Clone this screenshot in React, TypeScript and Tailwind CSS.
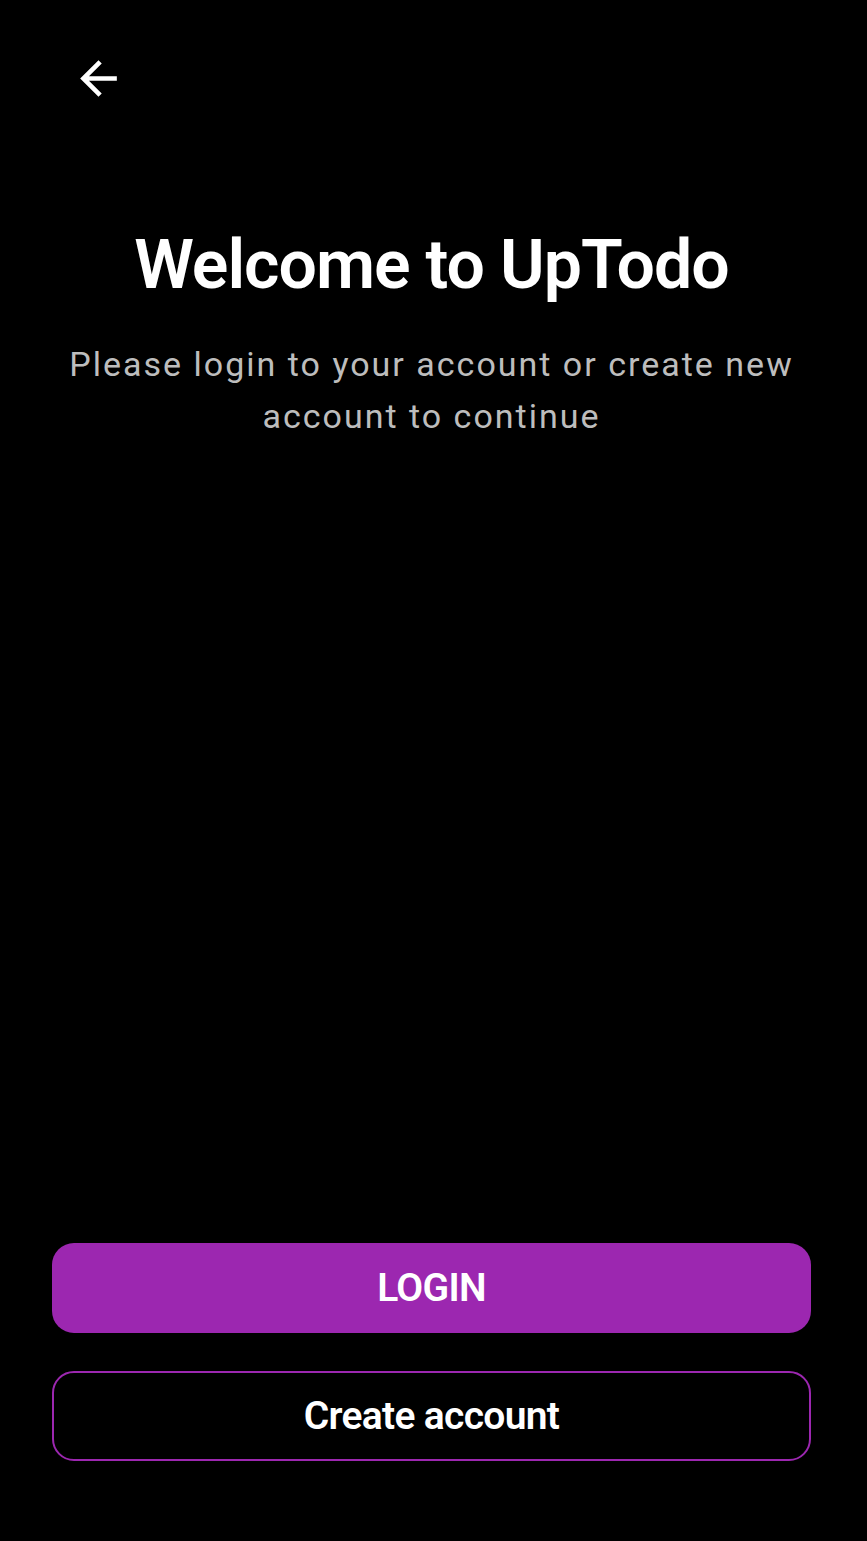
import React from "react";

export default function App() {
  return (
    <div className="flex h-[1541px] w-[867px] flex-col bg-black pl-[52px] pr-[56px] font-['Roboto',sans-serif]">
      <div className="pt-[51px]">
        <button className="ml-[19px] flex h-[55px] w-[55px] items-center justify-center text-white">
          <svg viewBox="0 0 24 24" className="h-[55px] w-[55px]" fill="currentColor">
            <path d="M20 11H7.83l5.59-5.59L12 4l-8 8 8 8 1.41-1.41L7.83 13H20v-2z" />
          </svg>
        </button>
      </div>
      <h1 className="mt-[121px] whitespace-nowrap text-center text-[68px] font-semibold leading-[76px] tracking-[-1px] text-white">
        Welcome to UpTodo
      </h1>
      <p className="mt-[35px] text-center text-[34px] leading-[52px] tracking-[2px] text-[#bdbdbd]">
        Please login to your account or create new account to continue
      </p>
      <div className="flex-1" />
      <div className="flex flex-col gap-[38px] pb-[80px]">
        <button className="h-[90px] w-full rounded-[22px] bg-[#9c27b0] text-[39px] font-semibold tracking-[-0.7px] text-white">
          LOGIN
        </button>
        <button className="h-[90px] w-full rounded-[22px] border-2 border-[#9c27b0] bg-black text-[39px] font-semibold tracking-[-0.7px] text-white">
          Create account
        </button>
      </div>
    </div>
  );
}
